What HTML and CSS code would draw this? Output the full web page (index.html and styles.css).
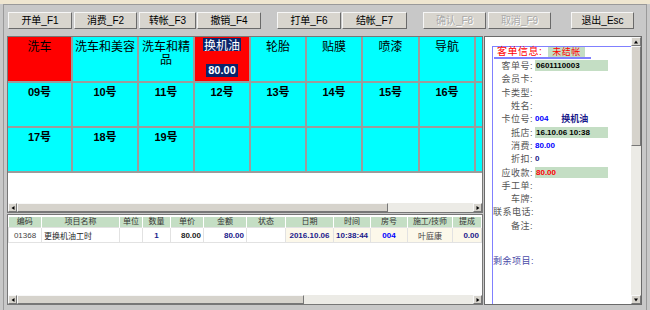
FILE: index.html
```html
<!DOCTYPE html>
<html lang="zh-CN">
<head>
    <meta charset="UTF-8">
    <title>前台收银</title>
    <link rel="stylesheet" href="styles.css">
</head>
<body>
    <div class="topstrip"></div>
    <div class="frame">
        <div class="toolbar">
            <button class="btn w64">开单_F1</button>
            <button class="btn w63 ml2">消费_F2</button>
            <button class="btn w57 ml2">转帐_F3</button>
            <button class="btn w64 ml1">撤销_F4</button>
            <button class="btn w64 ml16">打单_F6</button>
            <button class="btn w65 ml1">结帐_F7</button>
            <button class="btn w63 ml16" disabled>确认_F8</button>
            <button class="btn w63 ml2" disabled>取消_F9</button>
            <button class="btn w63 ml20">退出_Esc</button>
        </div>

        <div class="main">
            <div class="left">
                <!-- 房间 / 项目格子 -->
                <div class="room-panel">
                    <div class="rooms-view">
                        <div class="rooms">
                            <div class="room busy">洗车</div>
                            <div class="room">洗车和美容</div>
                            <div class="room">洗车和精品</div>
                            <div class="room busy active">
                                <span class="sel">换机油</span>
                                <span class="sel amount">80.00</span>
                            </div>
                            <div class="room">轮胎</div>
                            <div class="room">贴膜</div>
                            <div class="room">喷漆</div>
                            <div class="room">导航</div>
                            <div class="room"></div>

                            <div class="room num">09号</div>
                            <div class="room num">10号</div>
                            <div class="room num">11号</div>
                            <div class="room num">12号</div>
                            <div class="room num">13号</div>
                            <div class="room num">14号</div>
                            <div class="room num">15号</div>
                            <div class="room num">16号</div>
                            <div class="room num"></div>

                            <div class="room num">17号</div>
                            <div class="room num">18号</div>
                            <div class="room num">19号</div>
                            <div class="room"></div>
                            <div class="room"></div>
                            <div class="room"></div>
                            <div class="room"></div>
                            <div class="room"></div>
                            <div class="room"></div>
                        </div>
                    </div>
                    <div class="hscroll">
                        <div class="arrow left-arrow"></div>
                        <div class="thumb room-thumb"></div>
                        <div class="track"></div>
                        <div class="arrow right-arrow"></div>
                    </div>
                </div>

                <!-- 消费明细 -->
                <div class="detail-panel">
                    <div class="table-view">
                        <table class="items">
                            <colgroup>
                                <col class="col-code">
                                <col class="col-name">
                                <col class="col-unit">
                                <col class="col-qty">
                                <col class="col-price">
                                <col class="col-sum">
                                <col class="col-state">
                                <col class="col-date">
                                <col class="col-time">
                                <col class="col-room">
                                <col class="col-tech">
                                <col class="col-bonus">
                            </colgroup>
                            <thead>
                                <tr>
                                    <th>编码</th>
                                    <th>项目名称</th>
                                    <th>单位</th>
                                    <th>数量</th>
                                    <th>单价</th>
                                    <th>金额</th>
                                    <th>状态</th>
                                    <th>日期</th>
                                    <th>时间</th>
                                    <th>房号</th>
                                    <th>施工/技师</th>
                                    <th>提成</th>
                                </tr>
                            </thead>
                            <tbody>
                                <tr>
                                    <td class="c gray">01368</td>
                                    <td>更换机油工时</td>
                                    <td></td>
                                    <td class="c navy b">1</td>
                                    <td class="r b">80.00</td>
                                    <td class="r navy b">80.00</td>
                                    <td></td>
                                    <td class="c navy b cream">2016.10.06</td>
                                    <td class="c navy b cream">10:38:44</td>
                                    <td class="c blue b cream">004</td>
                                    <td class="c gray cream">叶庭康</td>
                                    <td class="r navy b cream">0.00</td>
                                </tr>
                            </tbody>
                        </table>
                    </div>
                    <div class="hscroll">
                        <div class="arrow left-arrow"></div>
                        <div class="thumb table-thumb"></div>
                        <div class="track"></div>
                        <div class="arrow right-arrow"></div>
                    </div>
                </div>
            </div>

            <!-- 客单信息 -->
            <div class="info-panel">
                <div class="info-body">
                    <div class="info-box">
                        <div class="info-title">客单信息:<span class="state">未结帐</span></div>
                        <div class="info-row"><span class="lbl">客单号:</span><span class="val hl b">0601110003</span></div>
                        <div class="info-row"><span class="lbl">会员卡:</span></div>
                        <div class="info-row"><span class="lbl">卡类型:</span></div>
                        <div class="info-row"><span class="lbl">姓名:</span></div>
                        <div class="info-row"><span class="lbl">卡位号:</span><span class="val blue b">004</span><span class="val navy b room-name">换机油</span></div>
                        <div class="info-row"><span class="lbl">抵店:</span><span class="val hl b">16.10.06 10:38</span></div>
                        <div class="info-row"><span class="lbl">消费:</span><span class="val blue b">80.00</span></div>
                        <div class="info-row"><span class="lbl">折扣:</span><span class="val navy b">0</span></div>
                        <div class="info-row"><span class="lbl">应收款:</span><span class="val hl red b">80.00</span></div>
                        <div class="info-row"><span class="lbl">手工单:</span></div>
                        <div class="info-row"><span class="lbl">车牌:</span></div>
                        <div class="info-row"><span class="lbl">联系电话:</span></div>
                        <div class="info-row"><span class="lbl">备注:</span></div>
                        <div class="info-row rest"><span class="lbl">剩余项目:</span></div>
                    </div>
                </div>
                <div class="vscroll">
                    <div class="arrow up-arrow"></div>
                    <div class="thumb info-thumb"></div>
                    <div class="track"></div>
                    <div class="arrow down-arrow"></div>
                </div>
            </div>
        </div>
    </div>
</body>
</html>
```

FILE: styles.css
```css
body {
    margin: 0;
    width: 650px;
    height: 310px;
    overflow: hidden;
    background: #c8c8c8;
    font-family: "Liberation Sans", "Noto Sans CJK SC", sans-serif;
}
.topstrip {
    height: 4px;
    background: #efe6d0;
}
.frame {
    box-sizing: border-box;
    width: 644px;
    height: 306px;
    margin-left: 3px;
    border: 1px solid #9a9a9a;
    border-bottom: none;
}

/* toolbar */
.toolbar {
    display: flex;
    padding: 7px 0 0 4px;
}
.btn {
    box-sizing: border-box;
    height: 17px;
    padding: 0;
    background: #d8d5ce;
    border: 1px solid;
    border-color: #f6f6f6 #6a6a6a #6a6a6a #f6f6f6;
    font-family: "Liberation Sans", "Noto Sans CJK SC", sans-serif;
    font-size: 10px;
    line-height: 14px;
    color: #000;
}
.btn:disabled {
    color: #aaa;
    text-shadow: 1px 1px 0 #fff;
}
.w57 { width: 57px; }
.w63 { width: 63px; }
.w64 { width: 64px; }
.w65 { width: 65px; }
.ml1 { margin-left: 1px; }
.ml2 { margin-left: 2px; }
.ml16 { margin-left: 16px; }
.ml20 { margin-left: 20px; }

.main {
    display: flex;
    height: 269px;
    margin-top: 7px;
    padding-left: 3px;
}
.left {
    width: 476px;
    display: flex;
    flex-direction: column;
    gap: 1px;
}

/* room grid */
.room-panel {
    box-sizing: border-box;
    height: 177px;
    border: 1px solid #777;
    background: #fff;
    display: flex;
    flex-direction: column;
}
.rooms-view {
    flex: 1;
    overflow: hidden;
}
.rooms {
    display: grid;
    grid-template-columns: 63px 64px 54px 54px 54px 54px 55px 54px 54px;
    grid-template-rows: 44px 43px 43px;
    gap: 2px;
    padding-bottom: 2px;
    width: max-content;
    background: #9c9c9c;
}
.room {
    background: #00ffff;
    padding: 2px 1px 0;
    font-family: "Noto Sans CJK SC", sans-serif;
    font-size: 12px;
    line-height: 13px;
    text-align: center;
    color: #000;
}
.room.busy {
    background: #ff0000;
}
.room.num {
    padding-top: 3px;
    font-family: "Liberation Sans", "Noto Sans CJK SC", sans-serif;
    font-size: 11px;
    font-weight: bold;
}
.room.active {
    display: flex;
    flex-direction: column;
    align-items: center;
    justify-content: space-between;
    padding: 1px 0 4px;
}
.sel {
    background: #0a246a;
    color: #fff;
    padding: 0 1px;
}
.sel.amount {
    font-family: "Liberation Sans", sans-serif;
    font-weight: bold;
    font-size: 11px;
    padding: 0 2px;
}

/* scrollbars */
.hscroll {
    display: flex;
    height: 9px;
    background: #ecebe6;
}
.vscroll {
    display: flex;
    flex-direction: column;
    width: 10px;
    background: #ecebe6;
}
.track {
    flex: 1;
}
.arrow, .thumb {
    box-sizing: border-box;
    background: #d6d3cc;
    border: 1px solid;
    border-color: #f8f8f8 #777 #777 #f8f8f8;
    position: relative;
}
.hscroll .arrow {
    width: 9px;
}
.vscroll .arrow {
    height: 9px;
}
.arrow::after {
    content: "";
    position: absolute;
    left: 50%;
    top: 50%;
    width: 0;
    height: 0;
    border: 2px solid transparent;
    transform: translate(-50%, -50%);
}
.left-arrow::after {
    border-right: 3px solid #000;
    border-left: none;
}
.right-arrow::after {
    border-left: 3px solid #000;
    border-right: none;
}
.up-arrow::after {
    border-bottom: 3px solid #000;
    border-top: none;
}
.down-arrow::after {
    border-top: 3px solid #000;
    border-bottom: none;
}
.room-thumb { width: 371px; }
.table-thumb { width: 287px; }
.info-thumb { height: 100px; }

/* detail table */
.detail-panel {
    box-sizing: border-box;
    height: 91px;
    border: 1px solid #777;
    background: #fff;
    display: flex;
    flex-direction: column;
}
.table-view {
    flex: 1;
    overflow: hidden;
    padding-top: 2px;
}
.items {
    table-layout: fixed;
    width: 473px;
    border-collapse: collapse;
    font-size: 8px;
    color: #222;
}
.col-code { width: 33px; }
.col-name { width: 78px; }
.col-unit { width: 23px; }
.col-qty { width: 28px; }
.col-price { width: 33px; }
.col-sum { width: 43px; }
.col-state { width: 39px; }
.col-date { width: 48px; }
.col-time { width: 37px; }
.col-room { width: 37px; }
.col-tech { width: 45px; }
.col-bonus { width: 29px; }
.items th {
    height: 10px;
    padding: 0;
    background: #c4dec4;
    border-right: 1px solid #fff;
    font-weight: normal;
    line-height: 10px;
    color: #333;
    white-space: nowrap;
}
.items td {
    height: 14px;
    padding: 0 2px;
    border: 1px solid #e2e2e2;
    white-space: nowrap;
}
.items td.cream {
    background: #fcf8ea;
}
.c { text-align: center; }
.r { text-align: right; }
.b { font-weight: bold; }
.gray { color: #444; }
.navy { color: #1a1a8a; }
.blue { color: #0000ff; }
.red { color: #ff0000; }

/* info panel */
.info-panel {
    box-sizing: border-box;
    width: 158px;
    margin-left: 1px;
    border: 1px solid #6a6a6a;
    background: #fff;
    display: flex;
}
.info-body {
    flex: 1;
    padding: 9px 0 0 7px;
    overflow: hidden;
}
.info-box {
    height: 100%;
    border-left: 1px solid #8080ff;
    border-top: 1px solid #8080ff;
}
.info-title {
    width: 94px;
    margin-left: 1px;
    padding-left: 3px;
    height: 10px;
    line-height: 10px;
    border-bottom: 2px solid #8080ff;
    color: #ff0000;
    font-size: 10px;
    letter-spacing: 0.5px;
}
.state {
    display: inline-block;
    margin-left: 6px;
    padding: 0 4px;
    background: #c4dec4;
    font-size: 9px;
    line-height: 10px;
}
.info-row {
    display: flex;
    align-items: center;
    height: 13.3px;
}
.lbl {
    width: 40px;
    text-align: right;
    font-size: 9px;
    color: #555;
    letter-spacing: 0.5px;
    white-space: nowrap;
}
.val {
    margin-left: 2px;
    font-size: 8px;
}
.val.hl {
    width: 72px;
    height: 11px;
    line-height: 11px;
    padding-left: 1px;
    background: #c4dec4;
}
.room-name {
    margin-left: 13px;
    font-size: 9px;
}
.rest {
    margin-top: 22px;
}
.rest .lbl {
    color: #4a4aa8;
}
```
